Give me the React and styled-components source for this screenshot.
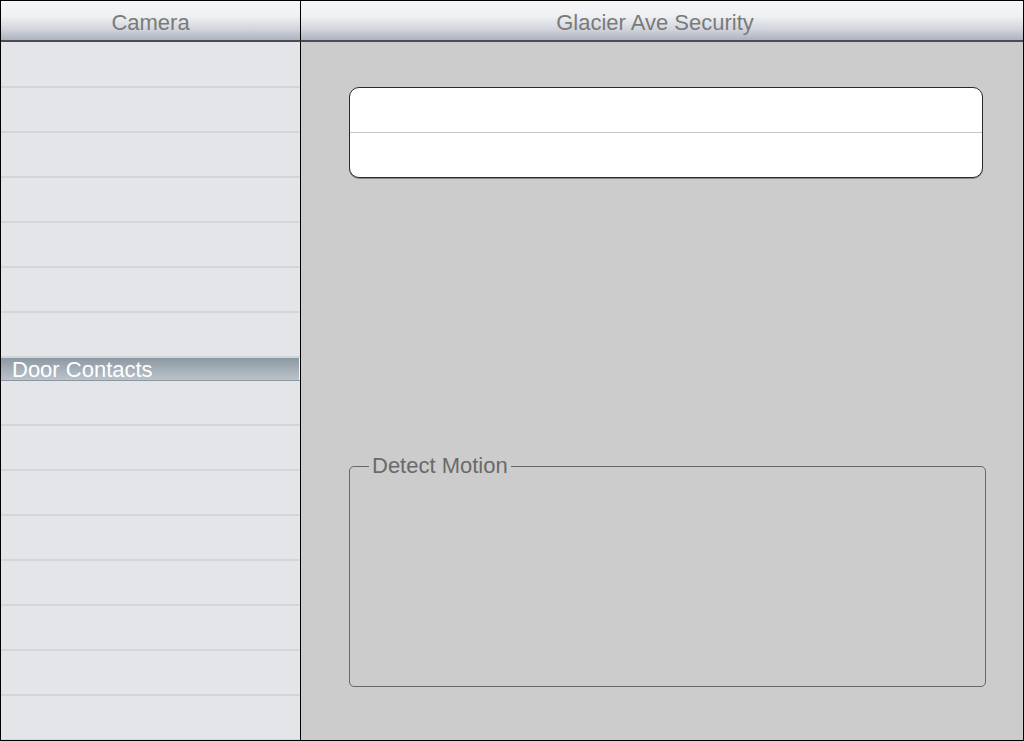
import React from "react";
import styled, { createGlobalStyle } from "styled-components";

const GlobalStyle = createGlobalStyle`
  html, body {
    margin: 0;
    padding: 0;
    background: #ffffff;
  }
  body {
    font-family: "Liberation Sans", Arial, sans-serif;
  }
`;

const leftRows = 7;
const rightRows = 8;

const Frame = styled.div`
  box-sizing: border-box;
  width: 1024px;
  height: 741px;
  border: 1px solid #000;
  overflow: hidden;
  display: grid;
  grid-template-columns: 300px 1fr;
  grid-template-rows: 41px 1fr;
`;

const HeaderCell = styled.div`
  box-sizing: border-box;
  display: flex;
  align-items: center;
  justify-content: center;
  padding-right: ${(p) => p.$shift || 0}px;
  padding-top: 4px;
  border-bottom: 2px solid #4a4d55;
  border-right: ${(p) => (p.$divider ? "1px solid #000" : "none")};
  background: linear-gradient(
    #f5f6f8 0%,
    #eef0f2 40%,
    #d2d5dc 72%,
    #adb2be 100%
  );
  color: #7a7a7a;
  font-size: 22px;
`;

const List = styled.div`
  box-sizing: border-box;
  border-right: 1px solid #000;
  background: #e4e5e9;
  padding-top: 1px;
  display: flex;
  flex-direction: column;
  overflow: hidden;
`;

const Row = styled.div`
  box-sizing: border-box;
  flex: none;
  height: 45px;
  border-bottom: 2px solid #d3d5d9;
`;

const SelectedRow = styled.div`
  box-sizing: border-box;
  flex: none;
  height: 23px;
  display: flex;
  align-items: center;
  padding: 2px 0 0 11px;
  color: #ffffff;
  font-size: 22px;
  background: linear-gradient(#8c98a2 0%, #a4aeb7 50%, #bac3cb 100%);
  border-bottom: 1px solid #8d979f;
  box-shadow: inset -1px 0 0 #f2f4f6;
`;

const Panel = styled.div`
  background: #cccccc;
  padding: 45px 0 0 48px;
  display: flex;
  flex-direction: column;
`;

const Card = styled.div`
  box-sizing: border-box;
  width: 634px;
  background: #ffffff;
  border: 1px solid #2a2a2a;
  border-radius: 10px;
  box-shadow: 0 1px 0 #8a8a8a;
  overflow: hidden;
`;

const CardRow = styled.div`
  height: 44px;
  border-top: ${(p) => (p.$first ? "none" : "1px solid #c6c6c6")};
`;

const Group = styled.fieldset`
  box-sizing: border-box;
  width: 637px;
  height: 234px;
  margin: 275px 0 0 0;
  padding: 0 0 0 19px;
  border: 1px solid #666666;
  border-radius: 5px;
  min-width: 0;
`;

const GroupTitle = styled.legend`
  padding: 0 3px;
  color: #6a6a6a;
  font-size: 22px;
`;

export default function App() {
  return (
    <>
      <GlobalStyle />
      <Frame>
        <HeaderCell $divider>Camera</HeaderCell>
        <HeaderCell $shift={14}>Glacier Ave Security</HeaderCell>
        <List>
          {Array.from({ length: leftRows }).map((_, i) => (
            <Row key={"a" + i} />
          ))}
          <SelectedRow>Door Contacts</SelectedRow>
          {Array.from({ length: rightRows }).map((_, i) => (
            <Row key={"b" + i} />
          ))}
        </List>
        <Panel>
          <Card>
            <CardRow $first />
            <CardRow />
          </Card>
          <Group>
            <GroupTitle>Detect Motion</GroupTitle>
          </Group>
        </Panel>
      </Frame>
    </>
  );
}
